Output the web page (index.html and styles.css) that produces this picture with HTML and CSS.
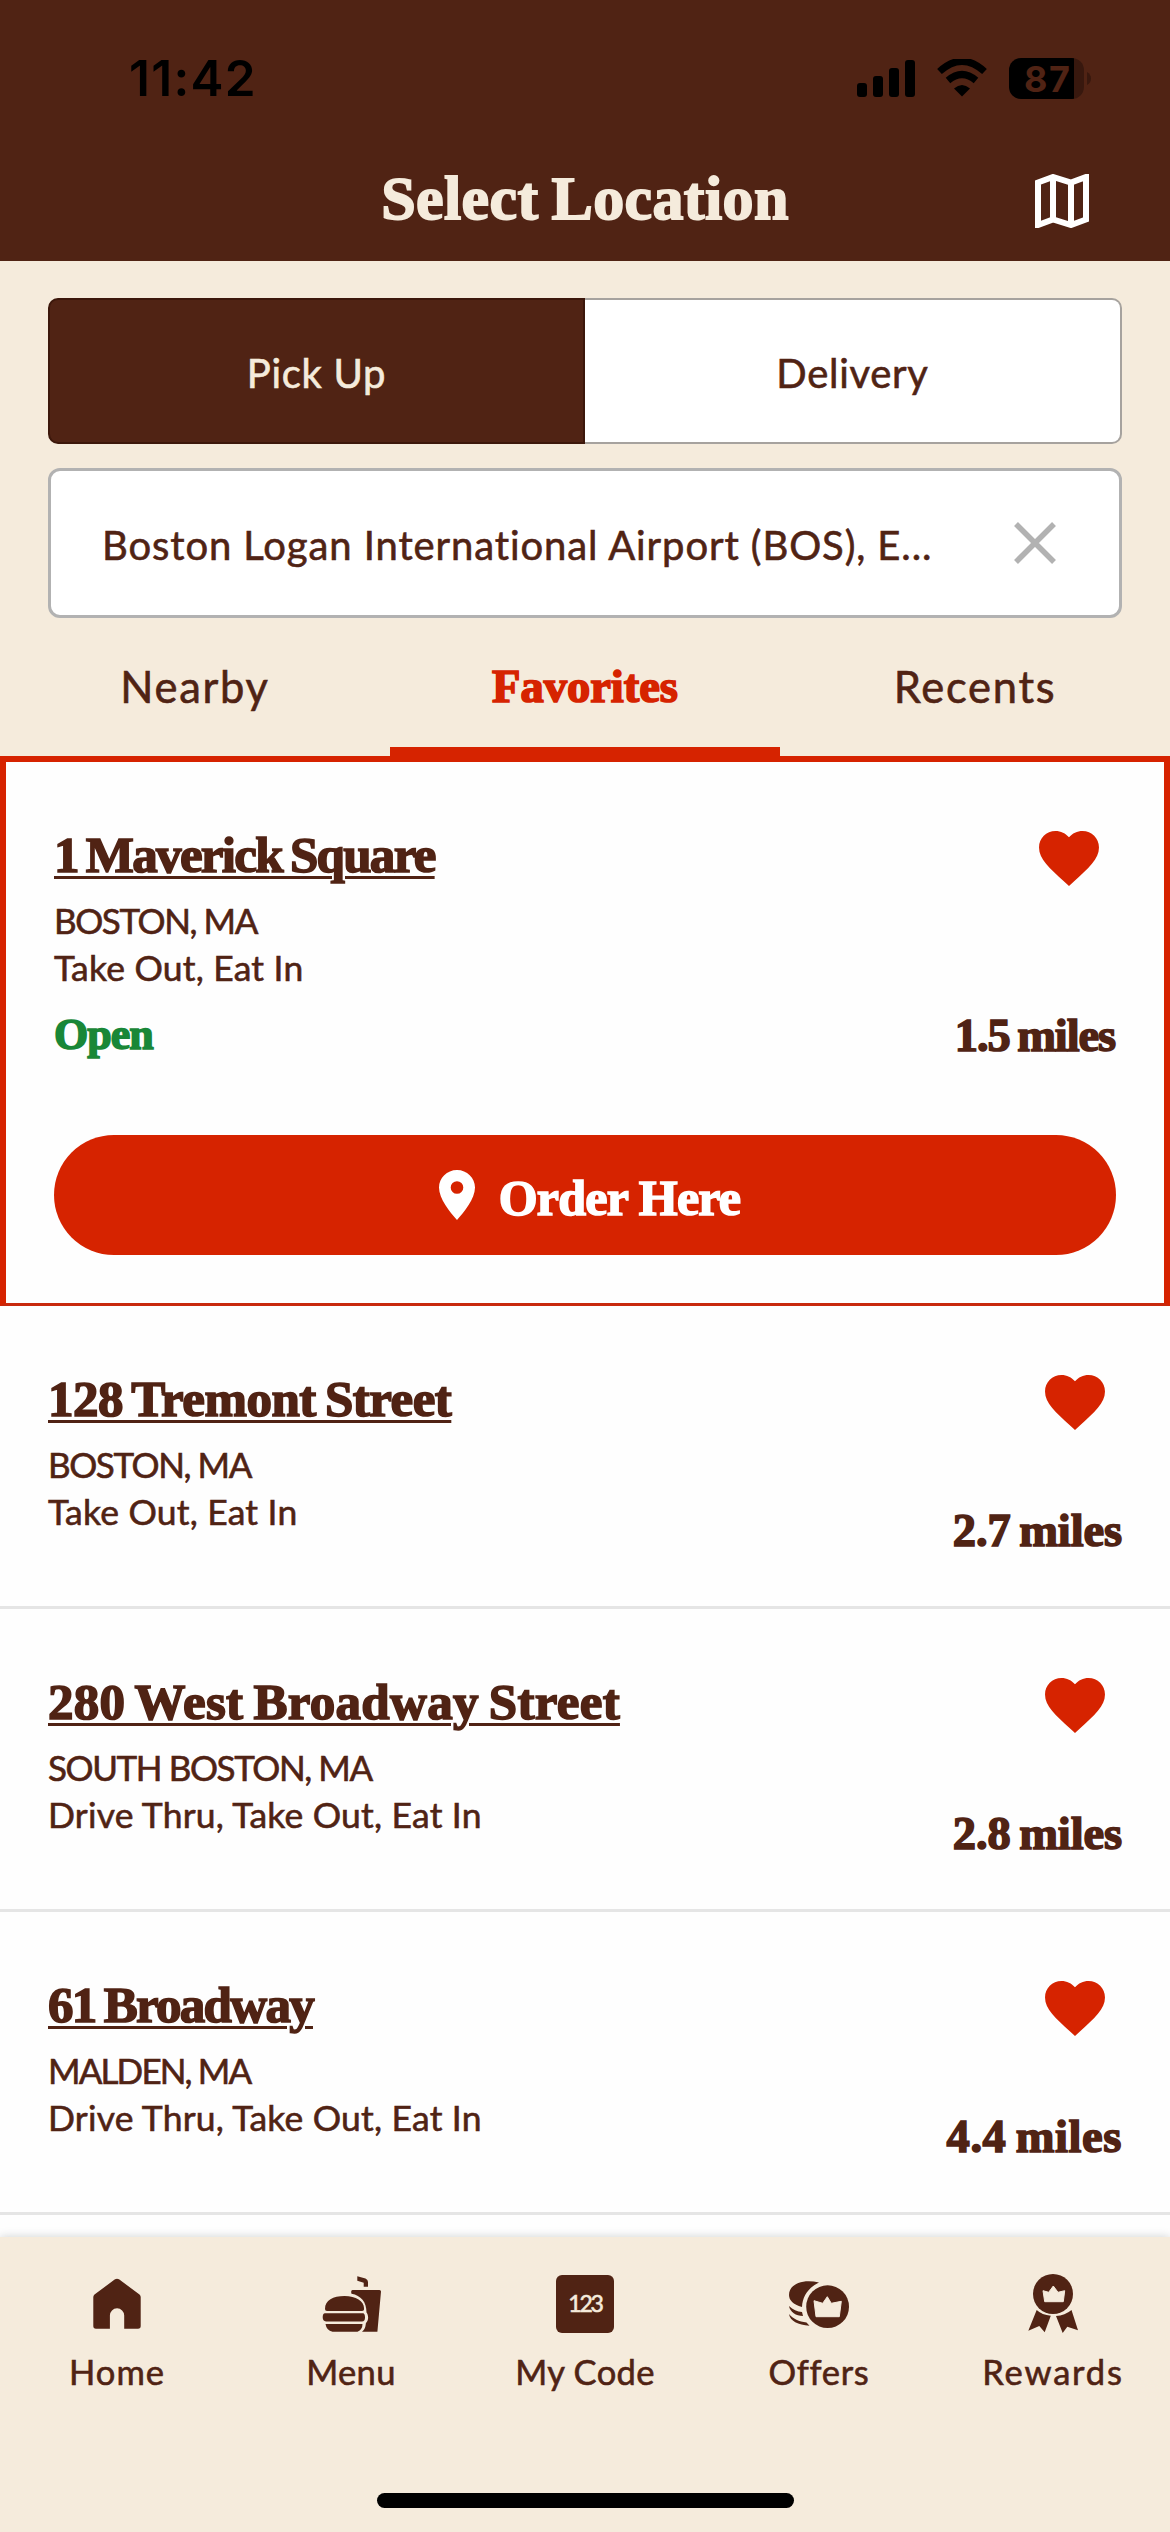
FILE: index.html
```html
<!DOCTYPE html>
<html lang="en">
<head>
<meta charset="utf-8">
<title>Select Location</title>
<link rel="stylesheet" href="styles.css">
</head>
<body>
<svg class="defs" width="0" height="0" aria-hidden="true">
  <symbol id="heart" viewBox="2 3 20 18.35"><path d="M12 21.35l-1.45-1.32C5.4 15.36 2 12.28 2 8.5 2 5.42 4.42 3 7.5 3c1.74 0 3.41.81 4.5 2.09C13.09 3.81 14.76 3 16.5 3 19.58 3 22 5.42 22 8.5c0 3.78-3.4 6.86-8.55 11.54L12 21.35z"/></symbol>
</svg>
<div class="screen">
  <header class="header">
    <div class="status">
      <span class="time">11:42</span>
      <div class="indicators">
        <svg width="58" height="38" viewBox="0 0 58 38"><rect y="24" width="10" height="14" rx="3"/><rect x="16" y="17" width="10" height="21" rx="3"/><rect x="32" y="9" width="10" height="29" rx="3"/><rect x="48" y="1" width="10" height="37" rx="3"/></svg>
        <svg class="wifi" width="50" height="38" viewBox="0 0 50 38"><path d="M2.5 12.5Q25-8 47.500 12.500" /><path d="M11 21.500Q25 9.500 39 21.500"/><path class="dot" d="M17 29.500Q25 22.500 33 29.500L25 37.500Z"/></svg>
        <div class="battery"><span class="level">87</span><svg class="nub" width="4" height="13" viewBox="0 0 4 13"><path d="M0 0Q4 2.500 4 6.500T0 13Z"/></svg></div>
      </div>
    </div>
    <div class="titlebar">
      <h1 class="title">Select Location</h1>
      <svg class="map" width="54" height="54" viewBox="0 0 54 54"><path d="M3 8.500L18 3L36 8.500L51 3V45.500L36 51L18 45.500L3 51Z"/><path d="M18 3V46M36 8V51"/></svg>
    </div>
  </header>

  <section class="controls">
    <div class="segmented">
      <div class="segment segment-active">Pick Up</div>
      <div class="segment">Delivery</div>
    </div>
    <div class="search">
      <span class="address">Boston Logan International Airport (BOS), E...</span>
      <svg class="clear" width="42" height="42" viewBox="0 0 42 42"><path d="M2 2L40 40M40 2L2 40"/></svg>
    </div>
  </section>
  <nav class="tabs">
    <div class="tab">Nearby</div>
    <div class="tab tab-active">Favorites</div>
    <div class="tab">Recents</div>
  </nav>

  <main class="list">
    <article class="store store-selected">
      <div class="row">
        <div class="info">
          <h2 class="name n1">1 Maverick Square</h2>
          <p class="line caps">BOSTON, MA</p>
          <p class="line">Take Out, Eat In</p>
          <p class="open">Open</p>
        </div>
        <div class="side">
          <svg class="heart" width="60" height="55"><use href="#heart"/></svg>
          <span class="miles m1">1.5 miles</span>
        </div>
      </div>
      <div class="order">
        <svg width="36" height="50" viewBox="0 0 36 50"><path fill-rule="evenodd" d="M18 0C8 0 0 8 0 17.500C0 29 11 42 18 50C25 42 36 29 36 17.500C36 8 28 0 18 0ZM18 11.200A6.300 6.300 0 1 1 18 23.800A6.300 6.300 0 1 1 18 11.200Z"/></svg>
        <span>Order Here</span>
      </div>
    </article>
    <article class="store">
      <div class="row">
        <div class="info">
          <h2 class="name n2">128 Tremont Street</h2>
          <p class="line caps">BOSTON, MA</p>
          <p class="line">Take Out, Eat In</p>
        </div>
        <div class="side">
          <svg class="heart" width="60" height="55"><use href="#heart"/></svg>
          <span class="miles">2.7 miles</span>
        </div>
      </div>
    </article>
    <article class="store">
      <div class="row">
        <div class="info">
          <h2 class="name n3">280 West Broadway Street</h2>
          <p class="line caps">SOUTH BOSTON, MA</p>
          <p class="line">Drive Thru, Take Out, Eat In</p>
        </div>
        <div class="side">
          <svg class="heart" width="60" height="55"><use href="#heart"/></svg>
          <span class="miles">2.8 miles</span>
        </div>
      </div>
    </article>
    <article class="store">
      <div class="row">
        <div class="info">
          <h2 class="name n4">61 Broadway</h2>
          <p class="line caps malden">MALDEN, MA</p>
          <p class="line">Drive Thru, Take Out, Eat In</p>
        </div>
        <div class="side">
          <svg class="heart" width="60" height="55"><use href="#heart"/></svg>
          <span class="miles m4">4.4 miles</span>
        </div>
      </div>
    </article>
  </main>

  <footer class="bottom">
    <nav class="nav">
      <div class="item">
        <svg width="48" height="60" viewBox="0 0 48 60"><path d="M22 5.300Q24 4 26 5.300L46.500 20.500Q47.700 21.500 47.700 23V52Q47.700 54.700 45 54.700H31.200V41.500A7.150 7.150 0 0 0 16.900 41.500V54.700H3Q.3 54.700 .3 52V23Q.3 21.500 1.500 20.500Z"/></svg>
        <span class="l-home">Home</span>
      </div>
      <div class="item">
        <svg width="62" height="60" viewBox="0 0 62 60"><path d="M37.300 2.200L45.500 4.500Q48 5.500 48 8V12.700H43.700V8.700L37.300 6.700ZM32.500 16H59.500Q61 16 61 17.500L57.400 57.700H42C46 55 45.500 50 46 49C49 46 48.500 41 46.500 38.500C46.500 28 41 21.500 31.500 19.800Q30.500 16 32.500 16Z"/><path d="M5 35C5 26 13 22 24.500 22C36 22 44 27 44 34Q44.500 37 42 37H7Q5 37 5 35ZM5 39.300H43Q45 39.500 45 43.500T42 47.500H6Q2.700 47.300 2.700 43.300T5 39.300ZM5.500 50H42.500Q42.500 55.500 37.500 57.700H12.500Q6.500 56.500 5.500 50Z"/></svg>
        <span class="l-menu">Menu</span>
      </div>
      <div class="item">
        <div class="code">123</div>
        <span class="l-code">My Code</span>
      </div>
      <div class="item">
        <svg width="60" height="60" viewBox="0 0 60 60"><path d="M30 8.500C14 4.500 0 10 0 21C0 26 4 30.500 13 33C13.500 22 20 13 30 8.500ZM0 32C4 36 8 37.500 13 38L14 42C7 42 1 38 0 32ZM0 40C4 45 10 47.500 17.500 48.500L20.500 51.800C9 51 1 47 0 40Z"/><circle cx="38.600" cy="32.700" r="21.400"/><path class="crown" d="M25 26.700L33.700 29.300L38.300 22.700L42.300 29.300L52.300 27.300L50.300 42.700H27Z"/></svg>
        <span class="l-offers">Offers</span>
      </div>
      <div class="item">
        <svg width="50" height="60" viewBox="0 0 50 60"><circle cx="25" cy="20" r="20"/><path class="crown" d="M15 16.700L20.700 18.300L25.300 12L30 18.300L36.700 16.700L35.300 27.700H16.700Z"/><path d="M8.700 36Q14 41 22.800 41.700L16.700 58.300L11.300 52L.3 56.700ZM43.500 36Q37 41.500 28 42L34.700 59L39.300 52.700L50 56.300Z"/></svg>
        <span class="l-rewards">Rewards</span>
      </div>
    </nav>
    <div class="home-bar"></div>
  </footer>
</div>
</body>
</html>
```
FILE: styles.css
```css
:root {
  --brown: #502314;
  --cream: #f5ebdc;
  --red: #d62300;
  --green: #198737;
  --serif: "Liberation Serif", serif;
  --sans: Lato, sans-serif;
}

* { box-sizing: border-box; }

body, h1, h2, p { margin: 0; }

svg { display: block; flex: none; }

.defs { position: absolute; }

.screen {
  display: flex;
  flex-direction: column;
  width: 1170px;
  height: 2532px;
  overflow: hidden;
  background: #fefefe;
  color: var(--brown);
  font-family: var(--sans);
  -webkit-text-stroke: 0.6px currentColor;
}

/* Header */
.header { height: 261px; background: var(--brown); }

.status {
  display: flex;
  align-items: center;
  justify-content: space-between;
  height: 156px;
  padding: 0 79px 0 129px;
  color: #000;
  font-family: Inter, sans-serif;
  -webkit-text-stroke: 0;
}

.time { font-size: 49.5px; font-weight: 600; line-height: 60px; letter-spacing: 1.3px; }

.indicators { display: flex; align-items: center; gap: 22px; }

.wifi { fill: none; stroke: #000; stroke-width: 7; }
.wifi .dot { fill: #000; stroke: none; }

.battery { display: flex; align-items: center; gap: 3px; }

.level {
  display: block;
  width: 75px;
  height: 41px;
  padding-left: 15px;
  border-radius: 12px;
  background: linear-gradient(90deg, #000 65px, #38180e 65px);
  color: var(--brown);
  font-size: 36px;
  font-weight: 700;
  line-height: 42px;
  letter-spacing: 1.5px;
}

.nub { fill: #38180e; }

.titlebar {
  display: grid;
  grid-template-columns: 1fr auto 1fr;
  align-items: start;
  padding: 12px 81px 0;
}

.title {
  grid-column: 2;
  color: var(--cream);
  font: 700 62px/60px var(--serif);
  letter-spacing: 0.4px;
  word-spacing: -3px;
  -webkit-text-stroke: 1.8px currentColor;
}

.map {
  justify-self: end;
  margin-top: 6px;
  fill: none;
  stroke: #fff;
  stroke-width: 6;
}

/* Order type and address */
.controls {
  display: flex;
  flex-direction: column;
  gap: 24px;
  padding: 37px 48px 0;
  background: var(--cream);
}

.segmented { display: grid; grid-template-columns: 1fr 1fr; height: 146px; }

.segment {
  padding-top: 43px;
  border: 2px solid #a6a29e;
  border-left: 0;
  border-radius: 0 10px 10px 0;
  background: #fff;
  font-size: 40px;
  line-height: 60px;
  letter-spacing: 0.7px;
  text-align: center;
}

.segment-active {
  border: 2px solid #3c170b;
  border-radius: 10px 0 0 10px;
  background: var(--brown);
  color: var(--cream);
}

.search {
  display: flex;
  align-items: center;
  justify-content: space-between;
  height: 150px;
  padding: 0 63px 0 51px;
  border: 3px solid #b2b2b2;
  border-radius: 12px;
  background: #fff;
}

.address { padding-top: 3px; font-size: 40px; line-height: 60px; letter-spacing: 0.9px; }

.clear { fill: none; stroke: #b2b2b2; stroke-width: 5.5; }

/* Tabs */
.tabs {
  display: grid;
  grid-template-columns: repeat(3, 1fr);
  height: 138px;
  background: var(--cream);
}

.tab { padding-top: 38px; font-size: 43.5px; line-height: 60px; letter-spacing: 1.7px; text-align: center; }

.tab-active {
  padding-top: 39px;
  border-bottom: 9px solid var(--red);
  color: var(--red);
  font: 700 46.5px/60px var(--serif);
  letter-spacing: 0;
  -webkit-text-stroke: 1.7px currentColor;
}

/* Store list */
.list { flex: 1; min-height: 0; overflow: hidden; }

.store {
  height: 303px;
  padding: 63px 48px 0;
  border-bottom: 3px solid #e5e5e5;
}

.store-selected {
  height: 550px;
  border: 6px solid var(--red);
  border-bottom: 3px solid #c8290d;
}

.row { display: flex; justify-content: space-between; height: 192px; }
.store-selected .row { height: 241px; }

.name {
  margin-bottom: 11px;
  font: 700 51px/60px var(--serif);
  text-decoration: underline;
  text-decoration-thickness: 3px;
  text-underline-offset: 4px;
  white-space: nowrap;
  word-spacing: -3px;
  -webkit-text-stroke: 1.6px currentColor;
}

.n1 { letter-spacing: -1.7px; }
.n2 { letter-spacing: -0.5px; }
.n3 { letter-spacing: 0.3px; }
.n4 { letter-spacing: -1.7px; }

.line { font-size: 35.5px; line-height: 48px; letter-spacing: 0.2px; white-space: nowrap; }
.caps { font-size: 35px; letter-spacing: -1.4px; }
.malden { letter-spacing: -1.85px; }

.open {
  margin-top: 13px;
  color: var(--green);
  font: 700 44px/60px var(--serif);
  letter-spacing: -1px;
  -webkit-text-stroke: 1.6px currentColor;
}

.side { display: flex; flex-direction: column; align-items: flex-end; justify-content: space-between; }

.heart { margin: 6px 17px 0 0; fill: var(--red); }

.miles {
  font: 700 46.5px/60px var(--serif);
  letter-spacing: -0.1px;
  word-spacing: -3px;
  -webkit-text-stroke: 1.6px currentColor;
}

.m1 { padding-right: 1px; letter-spacing: -1.1px; }
.m4 { letter-spacing: 0.6px; }

.order {
  display: flex;
  align-items: center;
  justify-content: center;
  gap: 24px;
  height: 120px;
  margin-top: 69px;
  padding-left: 9px;
  border-radius: 60px;
  background: var(--red);
  color: #fff;
  font: 700 50px/60px var(--serif);
  letter-spacing: -0.8px;
  -webkit-text-stroke: 1.6px currentColor;
}

.order span { padding-top: 6px; }
.order svg { fill: #fff; }

/* Bottom navigation */
.bottom {
  position: relative;
  height: 295px;
  padding-top: 37px;
  background: var(--cream);
  box-shadow: 0 0 9px rgba(30, 50, 60, 0.22);
}

.nav { display: grid; grid-template-columns: repeat(5, 1fr); }

.item {
  display: flex;
  flex-direction: column;
  align-items: center;
  gap: 14px;
  font-size: 34.5px;
  line-height: 48px;
}

.item svg { fill: var(--brown); }
.item svg .crown { fill: var(--cream); stroke: var(--cream); stroke-width: 1; stroke-linejoin: round; }

.code {
  width: 58px;
  height: 58px;
  margin: 1px 0;
  border-radius: 6px;
  background: var(--brown);
  color: var(--cream);
  font-size: 23px;
  line-height: 57px;
  text-align: center;
  letter-spacing: -2.2px;
}

.l-home { letter-spacing: 1px; }
.l-menu, .l-code { letter-spacing: 0.35px; }
.l-offers { letter-spacing: 0.7px; }
.l-rewards { letter-spacing: 1.8px; }

.home-bar {
  width: 417px;
  height: 15px;
  margin: 97px auto 0;
  border-radius: 8px;
  background: #000;
}
```
